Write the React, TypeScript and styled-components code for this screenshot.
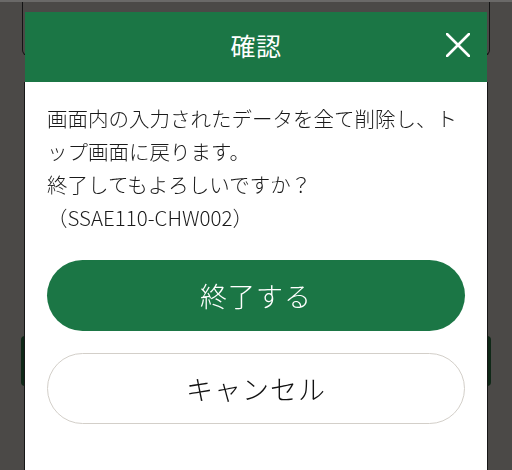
import React from "react";
import styled, { createGlobalStyle } from "styled-components";

const GlobalStyle = createGlobalStyle`
  html, body {
    margin: 0;
    padding: 0;
    background: #4b4947;
    font-family: "Noto Sans CJK JP", "Noto Sans", sans-serif;
    overflow: hidden;
  }
`;

/* 背景（暗くなった下のページ） */
export const Page = styled.div`
  height: 470px;
  border-top: 2px solid #6a6968;
  padding: 0 22px;
  box-sizing: border-box;
`;

export const UnderCard = styled.div`
  height: 53px;
  border: 1.5px solid #141414;
  border-top: none;
  border-radius: 0 0 6px 6px;
`;

export const UnderButton = styled.div`
  margin: 280px 0 0 -1px;
  width: 470px;
  height: 50px;
  border-radius: 4px;
  background: #0f2817;
`;

export const ModalOverlay = styled.div`
  position: fixed;
  top: 12px;
  left: 25px;
  width: 462px;
  bottom: -20px;
  display: flex;
  flex-direction: column;
`;

export const Header = styled.div`
  height: 70px;
  flex: none;
  background: #1b7645;
  display: grid;
  grid-template-columns: 1fr auto 1fr;
  align-items: center;
  padding-right: 17px;
  padding-left: 17px;
`;

export const Title = styled.h2`
  grid-column: 2;
  margin: 0;
  font-size: 25px;
  font-weight: 400;
  color: #ffffff;
  letter-spacing: 0.5px;
  margin-top: -4px;
`;

export const CloseBtn = styled.button`
  grid-column: 3;
  justify-self: end;
  width: 24px;
  height: 24px;
  padding: 0;
  border: none;
  background: transparent;
  cursor: pointer;
  display: flex;
  margin-top: -4px;
`;

export const Body = styled.div`
  flex: 1;
  background: #ffffff;
  padding: 20px 22px;
  box-shadow: -1px 0 #161616, 1px 0 #161616;
`;

export const Message = styled.p`
  margin: 0;
  font-size: 20.5px;
  font-weight: 300;
  line-height: 33px;
  color: #1a1a1a;
  white-space: pre-line;
`;

export const ActionBtn = styled.button<{ $primary?: boolean }>`
  display: flex;
  justify-content: center;
  align-items: center;
  width: 100%;
  height: 71px;
  border-radius: 36px;
  font-family: "Noto Sans CJK JP", "Noto Sans", sans-serif;
  font-size: 27px;
  font-weight: 300;
  cursor: pointer;
  background: ${({ $primary }) => ($primary ? "#1b7645" : "#ffffff")};
  color: ${({ $primary }) => ($primary ? "#ffffff" : "#111111")};
  border: ${({ $primary }) => ($primary ? "none" : "1.5px solid #d3cfc9")};
  letter-spacing: 1px;
`;

export const Actions = styled.div`
  display: flex;
  flex-direction: column;
  gap: 22px;
  margin-top: 26px;
`;

const CloseIcon = () => (
  <svg width="24" height="24" viewBox="0 0 24 24">
    <path d="M1 1 L23 23 M23 1 L1 23" stroke="#ffffff" strokeWidth="2.6" strokeLinecap="round" fill="none" />
  </svg>
);

export default function App() {
  return (
    <>
      <GlobalStyle />
      <Page>
        <UnderCard />
        <UnderButton />
      </Page>
      <ModalOverlay>
        <Header>
          <Title>確認</Title>
          <CloseBtn aria-label="閉じる">
            <CloseIcon />
          </CloseBtn>
        </Header>
        <Body>
          <Message>
            {"画面内の入力されたデータを全て削除し、トップ画面に戻ります。\n終了してもよろしいですか？\n（SSAE110-CHW002）"}
          </Message>
          <Actions>
            <ActionBtn $primary>終了する</ActionBtn>
            <ActionBtn>キャンセル</ActionBtn>
          </Actions>
        </Body>
      </ModalOverlay>
    </>
  );
}
